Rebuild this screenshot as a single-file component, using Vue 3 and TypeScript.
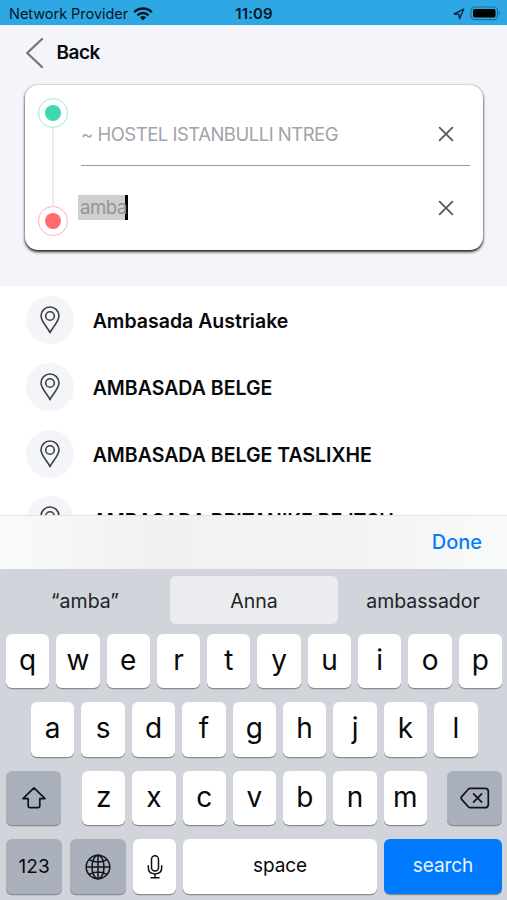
<script setup lang="ts">
const places: string[] = [
  'Ambasada Austriake',
  'AMBASADA BELGE',
  'AMBASADA BELGE TASLIXHE',
  'AMBASADA BRITANIKE REJTSH',
]
const topRow: string[] = [...'qwertyuiop']
const homeRow: string[] = [...'asdfghjkl']
const bottomRow: string[] = [...'zxcvbnm']
</script>

<template>
  <div class="phone">
    <header class="status">
      <div class="carrier">
        <span class="carrier-name">Network Provider</span>
        <svg class="wifi" width="20" height="14" viewBox="0 0 20 14" fill="none" stroke="#061722" stroke-width="2.5">
          <path d="M1.2 5.1C6.2 .2 13.8 .2 18.8 5.1" />
          <path d="M4.4 8.3C7.6 5.2 12.4 5.2 15.6 8.3" />
          <path d="M10 13.4 6.9 10.3C8.7 8.7 11.3 8.7 13.1 10.3Z" fill="#061722" stroke="none" />
        </svg>
      </div>
      <span class="clock">11:09</span>
      <div class="indicators">
        <svg width="12" height="12" viewBox="0 0 12 12" fill="none" stroke="#0b2a3d" stroke-width="1.4" stroke-linejoin="round">
          <path d="M1.1 6 10.7 1.2 6.6 10.8 5.9 6.3Z" />
        </svg>
        <svg width="31" height="15" viewBox="0 0 31 15">
          <rect x="1" y="1" width="26.5" height="12.6" rx="3.8" fill="none" stroke="#1b6f9e" stroke-width="1.2" />
          <rect x="3" y="3" width="22.5" height="8.6" rx="1.8" fill="#000" />
          <path d="M29 5.2Q31 7.3 29 9.4Z" fill="#1b6f9e" />
        </svg>
      </div>
    </header>

    <section class="search">
      <div class="back">
        <svg width="20" height="32" viewBox="0 0 20 32" fill="none" stroke="#77787b" stroke-width="2.4" stroke-linecap="round" stroke-linejoin="round">
          <path d="M17 2 2.2 16 17 30" />
        </svg>
        <span class="back-label">Back</span>
      </div>
      <div class="card">
        <div class="route">
          <span class="stop start"></span>
          <span class="track"></span>
          <span class="stop end"></span>
        </div>
        <div class="fields">
          <div class="field first">
            <span class="origin">~ HOSTEL ISTANBULLI NTREG</span>
            <svg class="clear" width="16" height="16" viewBox="0 0 16 16" fill="none" stroke="#555" stroke-width="1.7" stroke-linecap="round">
              <path d="M1.6 1.6 14.4 14.4M14.4 1.6 1.6 14.4" />
            </svg>
          </div>
          <div class="field second">
            <span class="selection"><span class="query">amba</span></span>
            <svg class="clear" width="16" height="16" viewBox="0 0 16 16" fill="none" stroke="#555" stroke-width="1.7" stroke-linecap="round">
              <path d="M1.6 1.6 14.4 14.4M14.4 1.6 1.6 14.4" />
            </svg>
          </div>
        </div>
      </div>
    </section>

    <main class="results">
      <div v-for="place in places" :key="place" class="place">
        <span class="badge">
          <svg width="22" height="30" viewBox="0 0 22 30" fill="none" stroke="#3d4145" stroke-width="1.6" stroke-linejoin="round">
            <path d="M11 27.6C8.9 22.8 2 16.5 2 11A9 9 0 0 1 20 11C20 16.5 13.1 22.8 11 27.6Z" />
            <circle cx="11" cy="11" r="4.3" />
          </svg>
        </span>
        <span class="name">{{ place }}</span>
      </div>
    </main>

    <div class="accessory"><span class="done">Done</span></div>

    <section class="keyboard">
      <div class="suggestions">
        <span class="quoted">“amba”</span>
        <span class="active">Anna</span>
        <span class="longer">ambassador</span>
      </div>
      <div class="row">
        <span v-for="k in topRow" :key="k" class="key"><span class="letter">{{ k }}</span></span>
      </div>
      <div class="row home">
        <span v-for="k in homeRow" :key="k" class="key"><span class="letter">{{ k }}</span></span>
      </div>
      <div class="row bottom">
        <span class="key dark shift">
          <svg width="26" height="24" viewBox="0 0 26 24" fill="none" stroke="#101318" stroke-width="1.7" stroke-linejoin="round">
            <path d="M13 1.8 24 12.7H18.8V19.8Q18.8 21.6 17 21.6H9Q7.2 21.6 7.2 19.8V12.7H2Z" />
          </svg>
        </span>
        <div class="middle">
          <span v-for="k in bottomRow" :key="k" class="key"><span class="letter">{{ k }}</span></span>
        </div>
        <span class="key dark delete">
          <svg width="30" height="22" viewBox="0 0 30 22" fill="none" stroke="#101318" stroke-width="1.7" stroke-linejoin="round" stroke-linecap="round">
            <path d="M10.4 1.3H25Q28.3 1.3 28.3 4.6V17.4Q28.3 20.7 25 20.7H10.4Q9.2 20.7 8.3 19.8L1.7 12.4Q.5 11 1.7 9.6L8.3 2.2Q9.2 1.3 10.4 1.3Z" />
            <path d="M13.6 6.9 21.6 15.1M21.6 6.9 13.6 15.1" />
          </svg>
        </span>
      </div>
      <div class="row last">
        <span class="key dark numbers"><span class="digits">123</span></span>
        <span class="key dark globe">
          <svg width="26" height="26" viewBox="0 0 26 26" fill="none" stroke="#101318" stroke-width="1.5">
            <circle cx="13" cy="13" r="11.8" />
            <ellipse cx="13" cy="13" rx="6" ry="11.8" />
            <path d="M13 1.2V24.8M1.2 13H24.8M4 5.6Q13 10.6 22 5.6M4 20.4Q13 15.4 22 20.4" />
          </svg>
        </span>
        <span class="key mic">
          <svg width="16" height="26" viewBox="0 0 16 26" fill="none" stroke="#101010" stroke-width="1.5" stroke-linecap="round">
            <rect x="4.5" y="1.7" width="7" height="15.3" rx="3.5" />
            <path d="M1.3 11.8V13.6Q1.3 19.9 8 19.9T14.7 13.6V11.8M8 20V23.8M4 23.8H12" />
          </svg>
        </span>
        <span class="key space"><span class="space-label">space</span></span>
        <span class="key go"><span class="go-label">search</span></span>
      </div>
    </section>
  </div>
</template>

<style>
body {
  margin: 0;
  background: #fff;
}
</style>

<style scoped>
.phone {
  width: 507px;
  height: 900px;
  overflow: hidden;
  display: flex;
  flex-direction: column;
  font-family: Inter, "Liberation Sans", sans-serif;
  color: #08090a;
  background: #fff;
}
.phone span {
  white-space: nowrap;
}
.status {
  height: 25px;
  flex: none;
  box-sizing: border-box;
  display: grid;
  grid-template-columns: 1fr auto 1fr;
  align-items: center;
  padding: 2px 6px 0 9px;
  background: #2ea8e5;
  color: #061722;
}
.carrier {
  display: flex;
  align-items: center;
  gap: 5px;
}
.carrier-name {
  font-size: 14.5px;
  letter-spacing: -0.03px;
}
.clock {
  margin-right: 2px;
  font-size: 15px;
  font-weight: 600;
  letter-spacing: 0.1px;
}
.indicators {
  display: flex;
  justify-content: flex-end;
  align-items: center;
  gap: 5px;
}
.search {
  height: 261px;
  flex: none;
  box-sizing: border-box;
  padding: 11px 24px 0 25px;
  background: #f3f5fa;
}
.back {
  height: 33px;
  display: flex;
  align-items: center;
  gap: 11.5px;
}
.back-label {
  font-size: 19px;
  font-weight: 600;
  letter-spacing: -0.5px;
}
.card {
  height: 165px;
  margin-top: 16px;
  box-sizing: border-box;
  display: flex;
  padding: 13px 13px 13px 12px;
  border-radius: 13px;
  background: #fff;
  box-shadow: 0 2px 3px rgba(0, 0, 0, 0.85), 0 0 2px rgba(0, 0, 0, 0.35);
}
.route {
  width: 31px;
  display: flex;
  flex-direction: column;
  align-items: center;
}
.stop {
  width: 30px;
  height: 30px;
  flex: none;
  box-sizing: border-box;
  border-radius: 50%;
  border: 1.5px solid;
  padding: 6px;
  background-clip: content-box;
}
.start {
  border-color: #a0e8d5;
  background-color: #42d6b2;
}
.end {
  border-color: #ffb3bb;
  background-color: #ff6b6e;
}
.track {
  width: 2px;
  height: 78px;
  background: #ececee;
}
.fields {
  flex: 1;
  margin-left: 10px;
}
.field {
  display: flex;
  align-items: center;
  justify-content: space-between;
  margin-left: 3px;
  padding-right: 16px;
}
.first {
  height: 62px;
  padding-top: 5px;
  border-bottom: 1px solid #999b9e;
}
.second {
  padding-top: 29px;
}
.origin {
  font-size: 18.5px;
  letter-spacing: -0.5px;
  color: #9fa4aa;
}
.selection {
  width: 47px;
  height: 25px;
  margin-left: -3px;
  display: flex;
  align-items: center;
  border-right: 3px solid #050505;
  background: #cfcfcf;
}
.query {
  margin: -1px 0 0 2px;
  font-size: 18.5px;
  letter-spacing: -0.4px;
  color: #929496;
}
.results {
  height: 229px;
  flex: none;
  overflow: hidden;
}
.place {
  height: 48px;
  display: flex;
  align-items: center;
  gap: 19.2px;
  margin: 10px 0 18.8px 25.5px;
}
.place + .place {
  margin-top: 0;
}
.badge {
  width: 48px;
  height: 48px;
  flex: none;
  display: flex;
  align-items: center;
  justify-content: center;
  border-radius: 50%;
  background: #f3f5f9;
}
.name {
  padding-top: 2px;
  font-size: 19.5px;
  font-weight: 600;
}
.accessory {
  height: 54px;
  flex: none;
  box-sizing: border-box;
  display: flex;
  align-items: center;
  justify-content: flex-end;
  padding: 0 25px 1px 0;
  border-top: 1px solid #e2e3e4;
  background: linear-gradient(90deg, #f9fafa, #f1f1f2 30%, #f3f3f4 70%, #f9fafa);
}
.done {
  font-size: 20px;
  font-weight: 500;
  color: #087cff;
}
.keyboard {
  height: 331px;
  flex: none;
  box-sizing: border-box;
  padding: 7px 5px 0 6px;
  background: #d1d4db;
}
.suggestions {
  height: 48px;
  display: grid;
  grid-template-columns: 158px 168px 158px;
  gap: 6px;
  margin-bottom: 9.7px;
  font-size: 19.5px;
}
.suggestions > span {
  display: flex;
  align-items: center;
  justify-content: center;
  padding-top: 1px;
  border-radius: 6px;
  color: #202226;
}
.suggestions > .active {
  background: #ebecf0;
}
.row {
  height: 54.8px;
  display: flex;
  gap: 7px;
  margin-bottom: 13.7px;
}
.key {
  flex: 1;
  min-width: 0;
  display: flex;
  align-items: center;
  justify-content: center;
  border-radius: 6px;
  background: #fff;
  box-shadow: 0 1.3px 0 #8b8d92;
}
.letter {
  margin-top: -3px;
  font-size: 28px;
  line-height: 34px;
}
.home {
  padding: 0 24.5px 0 25px;
}
.dark {
  background: #abb1bc;
}
.bottom {
  gap: 0;
  justify-content: space-between;
}
.middle {
  width: 345px;
  margin-left: 1px;
  display: flex;
  gap: 7px;
}
.shift,
.delete {
  flex: 0 0 55px;
}
.last {
  gap: 7.3px;
}
.numbers,
.globe {
  flex: 0 0 56.3px;
}
.mic {
  flex: 0 0 43px;
}
.go {
  flex: 0 0 118px;
  background: #007aff;
  color: #e9f4ff;
}
.digits,
.space-label,
.go-label {
  font-size: 19px;
}
.space-label,
.go-label {
  margin-top: -2px;
  letter-spacing: -0.1px;
}
</style>
